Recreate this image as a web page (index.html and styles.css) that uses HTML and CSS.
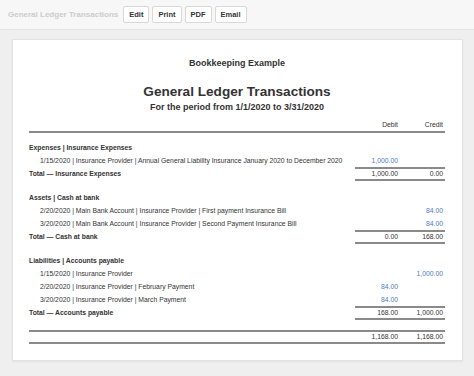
FILE: index.html
```html
<!DOCTYPE html>
<html>
<head>
<meta charset="utf-8">
<link rel="stylesheet" href="styles.css">
</head>
<body>
<div class="toolbar">
  <span class="tb-title">General Ledger Transactions</span>
  <button class="btn">Edit</button>
  <button class="btn">Print</button>
  <button class="btn">PDF</button>
  <button class="btn">Email</button>
</div>
<div class="content">
  <div class="page">
    <div class="company">Bookkeeping Example</div>
    <div class="title">General Ledger Transactions</div>
    <div class="period">For the period from 1/1/2020 to 3/31/2020</div>
    <div class="report">
      <div class="row head"><span class="desc"></span><span class="amt">Debit</span><span class="amt">Credit</span></div>

      <div class="section">
        <div class="row group"><span class="desc">Expenses | Insurance Expenses</span></div>
        <div class="row item"><span class="desc">1/15/2020 | Insurance Provider | Annual General Liability Insurance January 2020 to December 2020</span><span class="amt link">1,000.00</span><span class="amt"></span></div>
        <div class="row total"><span class="desc">Total — Insurance Expenses</span><span class="amt">1,000.00</span><span class="amt">0.00</span></div>
      </div>

      <div class="section">
        <div class="row group"><span class="desc">Assets | Cash at bank</span></div>
        <div class="row item"><span class="desc">2/20/2020 | Main Bank Account | Insurance Provider | First payment Insurance Bill</span><span class="amt"></span><span class="amt link">84.00</span></div>
        <div class="row item"><span class="desc">3/20/2020 | Main Bank Account | Insurance Provider | Second Payment Insurance Bill</span><span class="amt"></span><span class="amt link">84.00</span></div>
        <div class="row total"><span class="desc">Total — Cash at bank</span><span class="amt">0.00</span><span class="amt">168.00</span></div>
      </div>

      <div class="section">
        <div class="row group"><span class="desc">Liabilities | Accounts payable</span></div>
        <div class="row item"><span class="desc">1/15/2020 | Insurance Provider</span><span class="amt"></span><span class="amt link">1,000.00</span></div>
        <div class="row item"><span class="desc">2/20/2020 | Insurance Provider | February Payment</span><span class="amt link">84.00</span><span class="amt"></span></div>
        <div class="row item"><span class="desc">3/20/2020 | Insurance Provider | March Payment</span><span class="amt link">84.00</span><span class="amt"></span></div>
        <div class="row total"><span class="desc">Total — Accounts payable</span><span class="amt">168.00</span><span class="amt">1,000.00</span></div>
      </div>

      <div class="row grand"><span class="desc"></span><span class="amt">1,168.00</span><span class="amt">1,168.00</span></div>
    </div>
  </div>
</div>
</body>
</html>
```
FILE: styles.css
```css
html, body {
  margin: 0;
  padding: 0;
}
body {
  width: 474px;
  height: 376px;
  overflow: hidden;
  background: #efefef;
  font-family: "Liberation Sans", Arial, sans-serif;
  color: #333;
}
.toolbar {
  height: 29px;
  display: flex;
  align-items: center;
  gap: 3px;
  padding: 0 8px;
  background: #f7f7f7;
  border-bottom: 1px solid #e4e4e4;
  box-sizing: content-box;
}
.tb-title {
  font-size: 8px;
  font-weight: bold;
  color: #cccccc;
  margin-right: 2px;
}
.btn {
  font-family: "Liberation Sans", Arial, sans-serif;
  font-size: 7.5px;
  font-weight: bold;
  color: #333;
  background: #fff;
  border: 1px solid #d8d8d8;
  border-radius: 2px;
  height: 17px;
  padding: 0 5px;
  margin: 0;
}
.content {
  padding: 9px 11px 0 12px;
}
.page {
  background: #fff;
  border: 1px solid #e2e2e2;
  box-shadow: 0 1px 2px rgba(0,0,0,0.06);
  height: 322px;
  padding: 17px 17px 0 16px;
  box-sizing: border-box;
}
.company {
  text-align: center;
  font-size: 9px;
  font-weight: bold;
  line-height: 12px;
}
.title {
  text-align: center;
  font-size: 13.6px;
  font-weight: bold;
  line-height: 16px;
  margin-top: 15px;
}
.period {
  text-align: center;
  font-size: 9px;
  font-weight: bold;
  line-height: 12px;
  margin-top: 1px;
}
.report {
  margin-top: 6px;
  font-size: 6.8px;
}
.row {
  display: flex;
  line-height: 13px;
}
.desc {
  flex: 1;
  white-space: nowrap;
}
.amt {
  width: 45px;
  text-align: right;
  padding-right: 2px;
  box-sizing: border-box;
}
.link {
  color: #4a7cc4;
}
.head {
  border-bottom: 2px solid #8a8a8a;
  line-height: 12px;
}
.section {
  margin-top: 9px;
}
.section + .section {
  margin-top: 11px;
}
.group {
  line-height: 12px;
}
.group .desc {
  font-weight: bold;
}
.item .desc {
  padding-left: 11px;
}
.total .desc {
  font-weight: bold;
}
.total .amt {
  border-top: 2px solid #8a8a8a;
  border-bottom: 2px solid #8a8a8a;
  line-height: 10px;
}
.grand {
  margin-top: 10px;
  border-top: 2px solid #8a8a8a;
  border-bottom: 2px solid #8a8a8a;
  line-height: 10px;
}
```
